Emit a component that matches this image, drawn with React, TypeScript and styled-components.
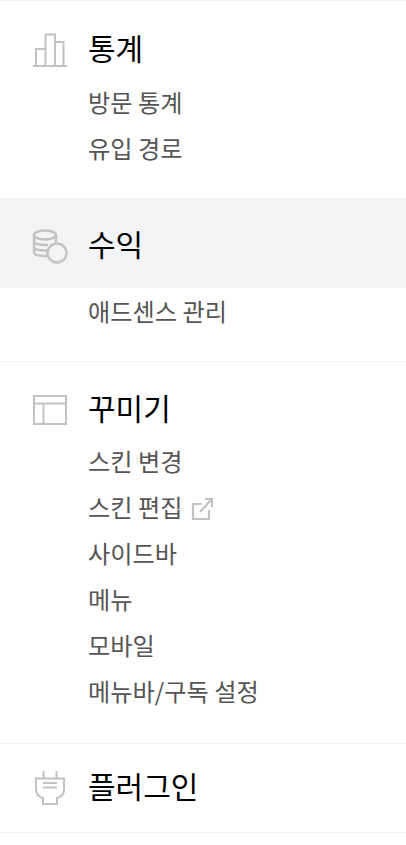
import React from "react";
import styled, { createGlobalStyle } from "styled-components";

const GlobalStyle = createGlobalStyle`
  html, body {
    margin: 0;
    padding: 0;
    background: #fff;
    font-family: "Noto Sans CJK KR", "Noto Sans", sans-serif;
  }
`;

const Nav = styled.nav`
  width: 406px;
  border-top: 1px solid #f1f1f1;
`;

const Section = styled.section<{ $top?: number; $bottom?: number; $line?: boolean }>`
  padding-top: ${(p) => p.$top ?? 0}px;
  padding-bottom: ${(p) => p.$bottom ?? 0}px;
  border-bottom: ${(p) => (p.$line ? "1px solid #f1f1f1" : "none")};
`;

const Head = styled.div<{ $active?: boolean; $height: number }>`
  display: flex;
  align-items: center;
  height: ${(p) => p.$height}px;
  padding-left: 32px;
  background: ${(p) => (p.$active ? "#f3f4f6" : "transparent")};
`;

const IconBox = styled.span<{ $shift?: number }>`
  display: flex;
  width: 36px;
  height: 36px;
  margin-right: 20px;
  margin-top: ${(p) => p.$shift ?? 6}px;
`;

const Title = styled.span`
  font-size: 30px;
  line-height: 40px;
  color: #000;
`;

const SubList = styled.ul<{ $gap?: number }>`
  list-style: none;
  margin: ${(p) => p.$gap ?? 0}px 0 0;
  padding: 0 0 0 88px;
`;

const SubItem = styled.li`
  display: flex;
  align-items: center;
  height: 46px;
  font-size: 24.2px;
  color: #555;
  white-space: pre;
`;

const LinkIcon = styled.svg`
  width: 24px;
  height: 24px;
  margin-left: 7px;
  margin-top: 5px;
  flex: none;
`;

const Glyph = ({ children }: { children: React.ReactNode }) => (
  <svg width="36" height="36" viewBox="0 0 36 36" fill="none" stroke="#c2c2c2" strokeWidth="2">
    {children}
  </svg>
);

const App = () => (
  <>
    <GlobalStyle />
    <Nav>
      <Section $top={16} $bottom={28}>
        <Head $height={60}>
          <IconBox>
            <Glyph>
              <path d="M1 34h34M4 34V17h9.500M13.500 34V2.500h9.500V34M23 10h8.500V34" />
            </Glyph>
          </IconBox>
          <Title>통계</Title>
        </Head>
        <SubList $gap={1}>
          <SubItem>방문 통계</SubItem>
          <SubItem>유입 경로</SubItem>
        </SubList>
      </Section>
      <Section $bottom={28} $line>
        <Head $active $height={90}>
          <IconBox>
            <Glyph>
              <ellipse cx="13" cy="7" rx="11" ry="4.500" strokeWidth="2.400" />
              <path
                d="M2 7v17c0 2.500 4.500 4 11 4h2M24 7v7M2 13c0 2.500 4.500 4 11 4h3M2 18.500c0 2.500 4.500 4 11 4h2"
                strokeWidth="2.400"
              />
              <circle cx="25" cy="25" r="9.500" strokeWidth="2.400" />
            </Glyph>
          </IconBox>
          <Title>수익</Title>
        </Head>
        <SubList $gap={-1}>
          <SubItem>애드센스 관리</SubItem>
        </SubList>
      </Section>
      <Section $top={15} $bottom={30} $line>
        <Head $height={60}>
          <IconBox>
            <Glyph>
              <path d="M2 4h32v28H2zM2 11.500h32M11.500 11.500V32" />
            </Glyph>
          </IconBox>
          <Title>꾸미기</Title>
        </Head>
        <SubList>
          <SubItem>스킨 변경</SubItem>
          <SubItem>
            스킨 편집
            <LinkIcon viewBox="0 0 24 24" fill="none" stroke="#c2c2c2" strokeWidth="2.200">
              <path d="M13 7H4v15h16V13M11 15L22 3M16 2h7v8" />
            </LinkIcon>
          </SubItem>
          <SubItem>사이드바</SubItem>
          <SubItem>메뉴</SubItem>
          <SubItem>모바일</SubItem>
          <SubItem>메뉴바/구독 설정</SubItem>
        </SubList>
      </Section>
      <Section $bottom={6} $line>
        <Head $height={82}>
          <IconBox $shift={6}>
            <Glyph>
              <path d="M11.500 1v7M24.500 1v7M4 8.500h28V19c0 5-3 8-7 9v6H11v-6c-4-1-7-4-7-9zM11 13h14M11 17.500h14" />
            </Glyph>
          </IconBox>
          <Title>플러그인</Title>
        </Head>
      </Section>
    </Nav>
  </>
);

export default App;
